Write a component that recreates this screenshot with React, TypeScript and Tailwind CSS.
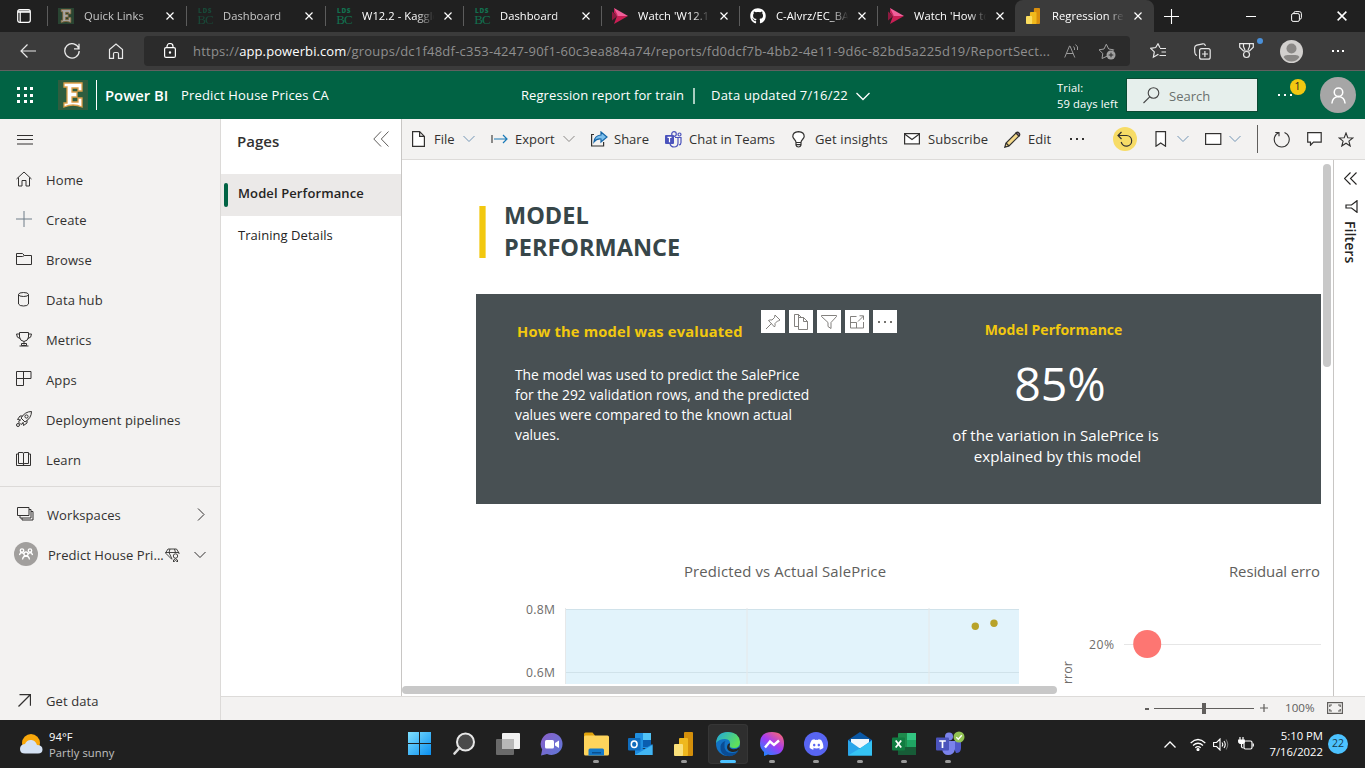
import type { ReactNode } from "react";
import { FaGithub, FaDiscord } from "react-icons/fa";

type SvgProps = { w?: number; h?: number; vb?: string; className?: string; children: ReactNode; sw?: number };

function Svg({ w = 16, h = 16, vb, className = "", children, sw = 1 }: SvgProps) {
  return (
    <svg
      width={w}
      height={h}
      viewBox={vb ?? `0 0 ${w} ${h}`}
      fill="none"
      stroke="currentColor"
      strokeWidth={sw}
      className={`block shrink-0 ${className}`}
    >
      {children}
    </svg>
  );
}

function CloseX({ size = 8 }: { size?: number }) {
  return (
    <Svg w={size} h={size} vb="0 0 8 8" sw={1.2} className="text-white">
      <path d="M.5.5l7 7M7.500.500l-7 7" />
    </Svg>
  );
}

function ChevDown({ className = "" }: { className?: string }) {
  return (
    <Svg w={12} h={8} className={className}>
      <path d="M.5 1L6 6.500 11.500 1" />
    </Svg>
  );
}

function ELogo({ size, dim }: { size: number; dim?: boolean }) {
  return (
    <svg width={size} height={size} viewBox="0 0 30 30" className={dim ? "block opacity-60" : "block"}>
      <rect width="30" height="30" fill="#2f5d3f" />
      <path
        d="M6 3h18v8h-4V8h-6v4h5v5h-5v5h6v-4h4v9q-9-4-18 0v-4h3V7H6z"
        fill="#fff"
        stroke="#e0a04a"
        strokeWidth="1.300"
      />
    </svg>
  );
}

function LdsLogo({ dim }: { dim?: boolean }) {
  return (
    <div className={`w-4 text-[#12704f] leading-none text-center ${dim ? "opacity-50" : ""}`}>
      <div className="h-[6px] font-['Open_Sans',sans-serif] text-[6.500px] leading-[6px] font-extrabold tracking-[0.500px]">LDS</div>
      <div className="h-[11px] font-['Liberation_Serif',serif] text-[13px] leading-[12px] tracking-[-0.800px]">BC</div>
    </div>
  );
}

function StreamLogo() {
  return (
    <svg width="16" height="16" viewBox="0 0 16 16" className="block">
      <path d="M2 0l14 8H4z" fill="#f0609a" />
      <path d="M2 0v5l4 3z" fill="#c22058" />
      <path d="M0 3.500L5.500 8 0 12.500z" fill="#8d1a40" />
      <path d="M2 16L16 8H5z" fill="#c91f55" />
    </svg>
  );
}

function PbiLogo({ w = 16, h = 16 }: { w?: number; h?: number }) {
  return (
    <svg width={w} height={h} viewBox="0 0 16 18" preserveAspectRatio="none" className="block">
      <rect x="9" y="0" width="7" height="18" rx="1" fill="#d98e0d" />
      <rect x="4.500" y="4.500" width="7.500" height="13.500" rx="1" fill="#f0b91c" />
      <rect x="0" y="9" width="7" height="9" rx="1" fill="#fbdd5e" />
    </svg>
  );
}

const tabs: { icon: ReactNode; label: string; dim?: boolean }[] = [
  { icon: <ELogo size={16} dim />, label: "Quick Links", dim: true },
  { icon: <LdsLogo dim />, label: "Dashboard", dim: true },
  { icon: <LdsLogo />, label: "W12.2 - Kaggle" },
  { icon: <LdsLogo />, label: "Dashboard" },
  { icon: <StreamLogo />, label: "Watch 'W12.1 -" },
  { icon: <FaGithub size={16} color="#fff" />, label: "C-Alvrz/EC_BAS" },
  { icon: <StreamLogo />, label: "Watch 'How to" },
];

function TabBody({ icon, label, dim }: { icon: ReactNode; label: string; dim?: boolean }) {
  return (
    <>
      <div className="w-4 flex-none">{icon}</div>
      <div
        className={`ml-[10px] w-[73px] flex-none overflow-hidden whitespace-nowrap text-[11.200px] tracking-[0.050px] ${dim ? "text-[#c8c8c8]" : "text-white"} [mask-image:linear-gradient(to_right,black_74%,transparent_99%)]`}
      >
        {label}
      </div>
      <div className="ml-[9px]">
        <CloseX />
      </div>
    </>
  );
}

function TabBar() {
  return (
    <div className="flex h-8 bg-[#202020] items-center">
      <div className="w-[47px] flex-none pl-[17px] text-white">
        <Svg w={14} h={14} sw={1.2}>
          <rect x=".7" y=".7" width="12.600" height="12.600" rx="2" />
          <path d="M1 3.200h12M3.200 3.500v9.500" />
          <path d="M1 2.200h12" />
        </Svg>
      </div>
      {tabs.map((t, i) => (
        <div key={i} className={`flex flex-none items-center h-full ${i < 2 ? "w-[139px]" : "w-[138px]"}`}>
          <div className="h-5 w-px mr-[10px] bg-[#5c5c5c]" />
          <TabBody {...t} />
        </div>
      ))}
      <div className="flex h-full w-[139px] flex-none items-center rounded-t-lg bg-[#3b3b3b] pl-[11px]">
        <TabBody icon={<PbiLogo w={14} />} label="Regression rep" />
      </div>
      <div className="ml-[10px] text-white">
        <Svg w={15} h={15} sw={1.1}>
          <path d="M7.500 0v15M0 7.500h15" />
        </Svg>
      </div>
      <div className="ml-[67px] h-px w-[10px] bg-white" />
      <div className="ml-[35px] text-white">
        <Svg w={11} h={11}>
          <rect x=".6" y="2.600" width="7.800" height="7.800" rx="1.500" />
          <path d="M2.800 2.500V2Q2.800.6 4.300.6h4q2.100 0 2.100 2.100v4q0 1.300-1.400 1.500" />
        </Svg>
      </div>
      <div className="ml-[35px]">
        <CloseX size={10} />
      </div>
    </div>
  );
}

function AddressBar() {
  return (
    <div className="flex h-[38px] items-center bg-[#3b3b3b] text-[#e8e8e8]">
      <div className="ml-5 w-[44px] flex-none">
        <Svg w={16} h={14} sw={1.200}>
          <path d="M16 7H1M7.500.5L1 7l6.500 6.500" />
        </Svg>
      </div>
      <div className="w-[44px] flex-none">
        <Svg w={16} h={16} sw={1.300}>
          <path d="M14.800 5.500A7.200 7.200 0 1 0 15.200 8M15 .8v5h-5" />
        </Svg>
      </div>
      <div className="w-[36px] flex-none">
        <Svg w={16} h={16} sw={1.200}>
          <path d="M1.500 6.500L8 1l6.500 5.500v8.800h-4v-4.500q0-1.300-1.300-1.300H6.800q-1.300 0-1.300 1.300v4.500h-4z" />
        </Svg>
      </div>
      <div className="flex h-[30px] w-[986px] flex-none items-center rounded-[4px] bg-[#2b2b2b] pl-5">
        <Svg w={12} h={15} sw={1.200} className="-mt-px text-white">
          <rect x=".6" y="4.600" width="10.800" height="9.800" rx="1.500" />
          <path d="M3 4.500V3.500a3 3 0 0 1 6 0v1" />
          <circle cx="6" cy="9.500" r=".6" fill="#fff" />
        </Svg>
        <div className="mt-px ml-[17px] w-[871px] flex-none whitespace-nowrap text-[13px] tracking-[0.230px] text-[#8f8f8f]">
          https://<span className="tracking-[0.100px] text-white">app.powerbi.com</span>
          /groups/dc1f48df-c353-4247-90f1-60c3ea884a74/reports/fd0dcf7b-4bb2-4e11-9d6c-82bd5a225d19/ReportSect...
        </div>
        <Svg w={16} h={16} className="text-[#9a9a9a]">
          <path d="M.7 14.500L5.500 3h.5l4.800 11.500M2.300 10.500h6.900M9.500 3.500q1.500 1.500 1 3.500M11.500 1.500q3 2 2 5.500" />
        </Svg>
        <Svg w={18} h={17} className="ml-[18px] text-[#a0a0a0]">
          <path d="M9.500 13L4 15.500l.8-5L1 6.800l5-.8L8.300 1.200l2.400 4.800 5 .8-1.500 1.500" />
          <circle cx="13" cy="12" r="4.500" fill="#a0a0a0" stroke="none" />
          <path d="M10.700 12h4.600M13 9.700v4.600" stroke="#2b2b2b" />
        </Svg>
      </div>
      <Svg w={17} h={16} sw={1.200} className="ml-[20px]">
        <path d="M8.500 11.700L8 11.500l-4.600 2.700.9-5.300L.7 5.300l5-.8L8 .8l2 4M10 5.500H16M11.500 9H16M9.500 12.500h6.500" />
      </Svg>
      <Svg w={17} h={17} sw={1.200} className="ml-[27px]">
        <rect x="5.600" y="5.600" width="10.600" height="10.600" rx="2" />
        <path d="M10.900 8v6M8 11h6M3 12.500Q1 12 .8 9.500L.6 5Q.6 2.800 2.800 2.200l6-1.400q2-.3 2.700 2" />
      </Svg>
      <Svg w={15} h={16} sw={1.200} className="ml-[28px]">
        <path d="M.7.700h13.600v3.500L10.500 8h-6L.7 4.200zM4.500.7v3L6 7M10.500.7v3L9 7" />
        <circle cx="7.500" cy="11.500" r="3" />
      </Svg>
      <div className="relative -ml-px h-full w-4 flex-none">
        <div className="absolute left-[4px] top-[6px] h-[6px] w-[6px] rounded-full bg-[#4a90d9]" />
      </div>
      <svg width="23" height="23" viewBox="0 0 23 23" className="ml-[11px] flex-none">
        <circle cx="11.500" cy="11.500" r="11.500" fill="#d2d0ce" />
        <circle cx="11.500" cy="8.500" r="5" fill="#8a8886" />
        <path d="M3.500 17q1-2 4-2h8q3 0 4 2-3 4.500-8 4.500t-8-4.500z" fill="#8a8886" />
      </svg>
      <div className="ml-[29px] flex gap-[3px]">
        <div className="h-[2px] w-[2px] bg-white" />
        <div className="h-[2px] w-[2px] bg-white" />
        <div className="h-[2px] w-[2px] bg-white" />
      </div>
    </div>
  );
}

function PersonIcon({ size }: { size: number }) {
  return (
    <Svg w={size} h={size} vb="0 0 16 18" sw={1.600}>
      <circle cx="8" cy="5.500" r="4.500" />
      <path d="M1 17.500q.5-7 7-7.500 6.500.5 7 7.500" />
    </Svg>
  );
}

function AppHeader() {
  return (
    <header className="flex h-12 items-center bg-[#016344] text-white">
      <div className="ml-[17px] grid w-[41px] flex-none grid-cols-[3px_3px_3px] gap-[3.500px]">
        {Array.from({ length: 9 }, (_, i) => (
          <div key={i} className="size-[3px] bg-white" />
        ))}
      </div>
      <ELogo size={30} />
      <div className="ml-[8px] h-[30px] w-px flex-none bg-white" />
      <div className="ml-[8px] w-[76px] flex-none whitespace-nowrap text-[14.800px] font-semibold">Power BI</div>
      <div className="mt-[2px] w-[340px] flex-none whitespace-nowrap text-[13px] tracking-[0.170px]">Predict House Prices CA</div>
      <div className="mt-[2px] w-[172px] flex-none whitespace-nowrap text-[13px] tracking-[0.080px]">Regression report for train</div>
      <div className="mt-[2px] h-4 w-[2px] flex-none bg-[#a9cdc0]" />
      <div className="mt-[2px] ml-[16px] w-[145px] flex-none whitespace-nowrap text-[13px] tracking-[0.200px]">Data updated 7/16/22</div>
      <Svg w={14} h={9} sw={1.300} className="mt-[2px]">
        <path d="M.5 1L7 7.500 13.500 1" />
      </Svg>
      <div className="mt-[2px] ml-[187px] w-[69px] flex-none whitespace-nowrap text-[11.200px] leading-4 tracking-[0.130px]">
        Trial:
        <br />
        59 days left
      </div>
      <div className="flex h-[34px] w-[132px] flex-none items-center border border-[#0a4a33] bg-[#e6efec] pl-[16px]">
        <Svg w={17} h={17} className="text-[#444]" sw={1.100}>
          <circle cx="10.500" cy="6" r="5.300" />
          <path d="M6.700 9.800L.5 16" />
        </Svg>
        <span className="mt-[3px] ml-[9px] text-[13px] text-[#6a716e]">Search</span>
      </div>
      <div className="relative ml-[20px] flex w-[40px] flex-none gap-[4px]">
        <div className="size-[2px] bg-white" />
        <div className="size-[2px] bg-white" />
        <div className="size-[2px] bg-white" />
        <div className="absolute -top-[15px] left-[11.500px] flex size-4 items-center justify-center rounded-full bg-[#f2c811] text-[10.500px] text-[#222]">
          1
        </div>
      </div>
      <div className="ml-[2px] flex size-9 flex-none items-center justify-center rounded-full bg-[#a6a6a6]">
        <PersonIcon size={17} />
      </div>
    </header>
  );
}

const nav: { label: string; icon: ReactNode }[] = [
  { label: "Home", icon: <path d="M.5 8L8 1l7.500 7M2.500 6.500V15H6V9.500h4V15h3.500V6.500" /> },
  { label: "Create", icon: <path d="M8 0v16M0 8h16" stroke="#6f7d88" /> },
  { label: "Browse", icon: <path d="M.5 2.500h6l2 2h7v9H.5zM.5 5.500h6l2-1" /> },
  {
    label: "Data hub",
    icon: (
      <>
        <ellipse cx="7.500" cy="3.500" rx="5" ry="2" />
        <path d="M2.500 3.500v9.500q1 2 5 2t5-2V3.500" />
      </>
    ),
  },
  {
    label: "Metrics",
    icon: <path d="M3.500 1.500h9V6q-.5 4-4.500 4.500Q4 10 3.500 6zM3.500 3H.5q0 4 3.500 4.500M12.500 3h3q0 4-3.500 4.500M8 10.500v3M5.500 12.500h5v2h-5zM3.500 15h9" />,
  },
  { label: "Apps", icon: <path d="M.5.500h14.500v7H.5zM.5 7.500h7v7H.5zM7.500.5v7" /> },
  {
    label: "Deployment pipelines",
    icon: (
      <>
        <path d="M15.500.500Q9 .5 5 7l4 4Q15.500 7 15.500.500zM6.500 5H4L1.500 8.500 5 9M11 9.500V12l-3.500 2.500L7 11M4 9l-1.500 2 2.500 2.500L7 12" />
        <circle cx="10.500" cy="5.500" r="1.600" />
        <circle cx="2" cy="14" r="1.500" />
      </>
    ),
  },
  { label: "Learn", icon: <path d="M2.500 1.500h3.500q1.500 0 1.500 1v11q0-1-1.500-1H2.500zM12.500 1.500H9q-1.500 0-1.500 1v11q0-1 1.500-1h3.500zM2.500 3h-2v11.500h14V3h-2" /> },
];

function Sidebar() {
  return (
    <aside className="flex w-[221px] flex-none flex-col border-r border-[#dcdad8] bg-[#f3f2f1] text-[13px] text-[#323130]">
      <div className="flex h-[41px] items-center pl-[17px]">
        <Svg w={16} h={10}>
          <path d="M0 .500h16M0 4.500h16M0 9h16" />
        </Svg>
      </div>
      <nav>
        {nav.map((n) => (
          <div key={n.label} className="flex h-10 items-center pl-4">
            <Svg className="-mt-[3px]">{n.icon}</Svg>
            <span className="ml-[14px] mt-[2px] whitespace-nowrap tracking-[0.120px]">{n.label}</span>
          </div>
        ))}
      </nav>
      <div className="mt-[6px] h-px bg-[#dcdad8]" />
      <div className="mt-[8px] flex h-10 items-center pl-[17px]">
        <Svg w={17} h={14} className="-mt-[3px]">
          <path d="M.5.500h11.500v8H.5zM12 2.500h2v8.500H3V9M14 4.500h2v8.500H5V11" />
        </Svg>
        <span className="mt-[2px] ml-[13px] w-[150px] flex-none tracking-[0.080px]">Workspaces</span>
        <Svg w={8} h={13} className="-mt-[2px]">
          <path d="M1 .5l6 6-6 6" />
        </Svg>
      </div>
      <div className="flex h-10 items-center pl-[14px]">
        <div className="-mt-[2px] flex size-6 flex-none items-center justify-center rounded-full bg-[#a19f9d] text-white">
          <Svg w={14} h={12} sw={1.300}>
            <circle cx="3" cy="2.500" r="1.700" />
            <circle cx="11" cy="2.500" r="1.700" />
            <circle cx="7" cy="6" r="2" />
            <path d="M.5 7q.5-2.500 2.500-2.500L5 6M13.500 7q-.5-2.500-2.500-2.500L9 6M3.500 11.500Q4 8 7 8t3.500 3.500" />
          </Svg>
        </div>
        <span className="mt-[2px] ml-[10px] w-[117px] flex-none whitespace-nowrap tracking-[0.050px]">Predict House Pri...</span>
        <Svg w={15} h={14} sw={0.9} className="-mt-px">
          <path d="M7 11.500L.5 5 3 1h8.500L14 5v1M.5 4.500H14M5 1L4 4.500 7 11M9.500 1l1 3.500" />
          <circle cx="10.500" cy="8" r="2.200" />
          <path d="M8.500 14v-2q2-2.500 4 0v2l-2-1.500z" />
        </Svg>
        <ChevDown className="-mt-px ml-[14px]" />
      </div>
      <div className="mt-auto mb-px flex h-9 items-center pl-[18px]">
        <Svg w={13} h={13} sw={1.300} className="-mt-px">
          <path d="M.5 12.500l12-12M1.500.700h11v11" />
        </Svg>
        <span className="mt-[2px] ml-[15px] tracking-[0.100px]">Get data</span>
      </div>
    </aside>
  );
}

function PagesPanel() {
  return (
    <section className="w-[181px] flex-none border-r border-[#c8c6c4] bg-white text-[#252423]">
      <div className="flex h-[55px] items-start pl-4">
        <h2 className="mt-[11px] w-[136px] text-[15px] leading-[22px] font-semibold text-[#323130]">Pages</h2>
        <Svg w={16} h={16} className="mt-[12px] text-[#605e5c]">
          <path d="M8 .5L.8 8 8 15.500M15.500.5L8.300 8l7.200 7.500" />
        </Svg>
      </div>
      <div className="flex h-[42px] items-center bg-[#ebe9e8] pl-[3px]">
        <div className="h-6 w-1 rounded-sm bg-[#016344]" />
        <span className="-mt-[2px] ml-[10px] whitespace-nowrap text-[13px] font-semibold tracking-[0.110px]">Model Performance</span>
      </div>
      <div className="flex h-[42px] items-center pl-[17px] text-[13px]">
        <span className="-mt-[2px] tracking-[0.050px]">Training Details</span>
      </div>
    </section>
  );
}

function ActionBar() {
  return (
    <div className="flex h-[41px] flex-none items-center border-b border-[#dddbd9] bg-[#f3f2f1] text-[13px] whitespace-nowrap text-[#323130] *:flex-none">
      <Svg w={13} h={16} className="ml-[10px]" sw={1.200}>
        <path d="M.6.600h7l4.800 4.800v10H.6zM7.600.6v4.800h4.800" fill="#fff" />
      </Svg>
      <span className="mt-[2px] ml-[9px] w-[29px]">File</span>
      <ChevDown className="text-[#7395b5]" />
      <Svg w={17} h={10} className="ml-[16px] text-[#1a7ab8]" sw={1.200}>
        <path d="M1 1v8" stroke="#444" />
        <path d="M3 5h13M12 1l4 4-4 4" />
      </Svg>
      <span className="mt-[2px] ml-[7px] w-[48px]">Export</span>
      <ChevDown className="text-[#8a8886]" />
      <Svg w={17} h={16} className="ml-[16px]" sw={1.200}>
        <path d="M3 3.500H.6v11.500h12V11" />
        <path d="M10 1l6 5-6 5V8Q5.500 7.500 3 11 3.500 4.500 10 4z" fill="#7cc0ee" stroke="#1666a8" />
      </Svg>
      <span className="mt-[2px] ml-[6px] w-[51px]">Share</span>
      <svg width="17" height="17" viewBox="0 0 17 17" fill="none" stroke="#4b53bc" strokeWidth="1.200">
        <circle cx="9" cy="3" r="2.300" />
        <circle cx="14.500" cy="3.500" r="1.500" />
        <path d="M10 6.500h6v5q0 2-2 2.500M5 13q1 3 4 3 4 0 4-4V6.500" />
        <rect x="0" y="4" width="9" height="9" rx="1" fill="#4b53bc" stroke="none" />
        <path d="M2.500 6.300h4M4.500 6.300v4.900" stroke="#fff" />
      </svg>
      <span className="mt-[2px] ml-[7px] w-[103px]">Chat in Teams</span>
      <Svg w={13} h={17} sw={1.200}>
        <path d="M4 11.500Q4 10 2.500 8.500.8 6.500.8 5.500.8 1 6.500.600 12.200 1 12.200 5.500q0 1-1.700 3Q9 10 9 11.500V14q-.5 2-2.500 2T4 14z" fill="#fff" />
        <path d="M4 11.500h5M4 13.700h5" />
      </Svg>
      <span className="mt-[2px] ml-[10px] w-[89px] tracking-[0.130px]">Get insights</span>
      <Svg w={16} h={12} sw={1.200} className="-mt-px">
        <rect x=".6" y=".6" width="14.800" height="10.300" fill="#fff" />
        <path d="M.6 1L8 6.500 15.400 1" />
      </Svg>
      <span className="mt-[2px] ml-[8px] w-[76px] tracking-[0.080px]">Subscribe</span>
      <Svg w={17} h={17} sw={1.200}>
        <path d="M.8 16.200L2 12 12 2l3 3L5 15z" fill="#f5d98a" />
        <path d="M12 2q1.500-1.500 3 0t0 3z" fill="#b887b0" />
        <path d="M2 12l3 3" />
      </Svg>
      <span className="mt-[2px] ml-[7px] w-[42px]">Edit</span>
      <div className="flex w-[43px] gap-[4px]">
        <i className="size-[2px] bg-[#323130]" />
        <i className="size-[2px] bg-[#323130]" />
        <i className="size-[2px] bg-[#323130]" />
      </div>
      <div className="flex size-6 items-center justify-center rounded-full bg-[#f7dc66]">
        <Svg w={16} h={16} sw={1.200}>
          <path d="M1 4.500h8.500a5.300 5.300 0 1 1-5.300 6.500M4.500 1L1 4.500 4.500 8" />
        </Svg>
      </div>
      <Svg w={12} h={16} className="ml-[18px]" sw={1.200}>
        <path d="M1 .600h9.500v14.600L5.700 12 1 15.200z" fill="#fff" />
      </Svg>
      <ChevDown className="ml-[10px] text-[#7395b5]" />
      <Svg w={17} h={12} className="ml-[16px]" sw={1.200}>
        <rect x=".6" y=".6" width="15.200" height="10.800" fill="#fff" />
      </Svg>
      <ChevDown className="ml-[7px] text-[#7395b5]" />
      <div className="ml-[16px] h-7 w-px bg-[#605e5c]" />
      <Svg w={18} h={17} className="ml-[15px]" sw={1.100}>
        <path d="M6 1.500a7.500 7.500 0 1 0 5.500 0M2.300 1.500H6v3.700" />
      </Svg>
      <Svg w={15} h={14} className="ml-[16px]" sw={1.200}>
        <path d="M.7.700h13.500v9.500H6.500l-3 3v-3H.7z" fill="#fff" />
      </Svg>
      <Svg w={16} h={15} className="ml-[16px]" sw={1.100}>
        <path d="M8 1l1.800 4.700 5 .2-3.900 3.200 1.300 4.900L8 11.200 3.800 14l1.300-4.900L1.200 5.900l5-.2z" />
      </Svg>
    </div>
  );
}

const visualButtons: ReactNode[] = [
  <path d="M10 1l5 5-1.500.8-1 .2-2.500 2.500q.5 2-.5 3.500L3.500 6.500Q5 5.500 7 6l2.500-2.500zM6.500 9.500L1 15" />,
  <path d="M5.500 3.500V.500H1.500v12h3.500M5.500 3.500h5l4 4v8h-9zM10.500 3.500v4h4M5.500.5l3 3" />,
  <path d="M.5 1.500h15v1L10 8.500v6l-3-2V8.500L.5 2.500z" />,
  <path d="M7.500 2.500h-6v11.500h13V8M1.500 8.500h6v5.500M9 7.500l5.500-5.500M10.500 1.800h4v4" />,
  <path d="M1 8h2M7 8h2M13 8h2" strokeWidth="2" />,
];

function Report() {
  return (
    <div className="h-[524px] w-[919px] overflow-hidden">
      <div className="ml-[77px] flex h-[134px] items-start pt-[46px]">
        <div className="h-[52px] w-[7px] border-x-[0.500px] border-[#f7dc66] bg-[#f2c80f]" />
        <h1 className="ml-[18px] -mt-[7px] w-[240px] text-[23.500px] leading-8 font-bold text-[#374649]">
          MODEL
          <br />
          PERFORMANCE
        </h1>
      </div>
      <div className="relative ml-[74px] flex h-[210px] bg-[#485053] text-white">
        <div className="w-[476px] flex-none pl-[39px]">
          <h3 className="mt-[27px] pl-[2px] text-[14.700px] leading-5 font-bold tracking-[0.180px] text-[#f2c80f]">How the model was evaluated</h3>
          <p className="mt-[24px] whitespace-nowrap text-[13.850px] leading-5">
            The model was used to predict the SalePrice
            <br />
            for the 292 validation rows, and the predicted
            <br />
            values were compared to the known actual
            <br />
            values.
          </p>
        </div>
        <div className="w-[207px] flex-none text-center whitespace-nowrap">
          <h3 className="mt-[26px] pr-[4px] text-[14px] leading-5 font-bold text-[#f2c80f]">Model Performance</h3>
          <div className="mt-[11px] pl-[9px] text-[46.500px] leading-[64px]">85%</div>
          <p className="mt-[10px] text-[15.100px] leading-[21px]">
            of the variation in SalePrice is
            <br />
            <span className="pl-[4px]">explained by this model</span>
          </p>
        </div>
        <div className="absolute top-[16px] left-[285px] flex gap-1">
          {visualButtons.map((b, i) => (
            <div key={i} className="flex h-[23px] w-6 items-center justify-center bg-white text-[#75736f]">
              <Svg sw={0.9}>{b}</Svg>
            </div>
          ))}
        </div>
      </div>
      <svg width="919" height="180" viewBox="402 504 919 180" className="block">
        <g fill="#605e5c" className="text-[14.900px]">
          <text x="684" y="577" textLength="202">Predicted vs Actual SalePrice</text>
          <text x="1229" y="577" textLength="91">Residual erro</text>
        </g>
        <g fill="#6e6c6a" className="text-[12.200px]">
          <text x="526" y="614" textLength="29">0.8M</text>
          <text x="526" y="677" textLength="29">0.6M</text>
          <text x="1089" y="649" textLength="25">20%</text>
          <text transform="translate(1072 684) rotate(-90)" className="text-[12.500px]">rror</text>
        </g>
        <rect x="565" y="609" width="454" height="80" fill="#e2f3fb" />
        <path d="M565 609.500h454M565 672.500h454" stroke="#d0e2ea" />
        <path d="M565.500 608v80M747 608v80M929 608v80" stroke="#e6e8e9" />
        <circle cx="975.300" cy="626.300" r="3.700" fill="#b8a229" />
        <circle cx="994" cy="623.200" r="3.700" fill="#b8a229" />
        <path d="M1124 644.500h197" stroke="#e6e6e6" />
        <circle cx="1147.200" cy="644" r="14" fill="#fd7672" />
      </svg>
    </div>
  );
}

function FiltersPane() {
  return (
    <aside className="flex w-8 flex-none flex-col items-center border-l border-[#c8c6c4] bg-white text-[#252423]">
      <Svg w={13} h={13} className="mt-[12px] ml-[2px]" sw={1.100}>
        <path d="M6.500.5l-6 6 6 6M12.500.5l-6 6 6 6" />
      </Svg>
      <Svg w={13} h={13} className="mt-[15px] ml-[4px]" sw={1.200}>
        <path d="M12 .7v11.600L6.500 8H1V5h5.500z" />
      </Svg>
      <div className="mt-[8px] text-[14px] leading-5 font-semibold tracking-[0.100px] [writing-mode:vertical-rl]">Filters</div>
    </aside>
  );
}

function StatusBar() {
  return (
    <div className="flex h-6 flex-none items-center border-t border-[#dddbd9] bg-[#f3f2f1] text-[#605e5c]">
      <div className="ml-[924px] h-[2px] w-[4px] bg-[#605e5c]" />
      <div className="ml-[5px] flex h-[11px] w-[100px] flex-none items-center">
        <div className="h-px w-12 bg-[#605e5c]" />
        <div className="h-[11px] w-1 bg-[#605e5c]" />
        <div className="h-px w-12 bg-[#605e5c]" />
      </div>
      <Svg w={8} h={8} className="-mt-px ml-[6px]" sw={1.200}>
        <path d="M4 0v8M0 4h8" />
      </Svg>
      <div className="-mt-px ml-[17px] w-[42px] flex-none text-[11.600px]">100%</div>
      <Svg w={16} h={12} sw={1.200} className="-mt-px">
        <rect x=".6" y=".6" width="14.800" height="10.800" />
        <path d="M2.800 5V3H5M11 3h2.200v2M13.200 7v2H11M5 9H2.800V7" />
      </Svg>
    </div>
  );
}

function Grad({ id, a, b }: { id: string; a: string; b: string }) {
  return (
    <linearGradient id={id} x1="0" y1="0" x2="1" y2="1">
      <stop offset="0" stopColor={a} />
      <stop offset="1" stopColor={b} />
    </linearGradient>
  );
}

const apps: { art: ReactNode; dot?: boolean; active?: boolean }[] = [
  {
    art: (
      <>
        <defs><Grad id="win" a="#7fe0ff" b="#0a8ff0" /></defs>
        <path d="M0 0h11v11H0zM12 0h11v11H12zM0 12h11v11H0zM12 12h11v11H12z" fill="url(#win)" />
      </>
    ),
  },
  {
    art: (
      <>
        <circle cx="13.500" cy="10" r="8.500" fill="#4a4a4a" stroke="#e8e8e8" strokeWidth="2" />
        <path d="M7.500 16L2.500 21.500" stroke="#dcdcdc" strokeWidth="2.600" strokeLinecap="round" />
      </>
    ),
  },
  {
    art: (
      <>
        <rect x="6" y="1" width="18" height="16" rx="1" fill="#f0f0f0" />
        <rect x="0" y="7" width="18" height="16" rx="1" fill="#6a6a6a" />
        <path d="M6 7h12v10H6z" fill="#b8b8b8" />
      </>
    ),
  },
  {
    art: (
      <>
        <defs><Grad id="chat" a="#8a5fc8" b="#5d78d8" /></defs>
        <path d="M12 1a11 11 0 1 1-5 21L1 23.500 2.200 17.500A11 11 0 0 1 12 1z" fill="url(#chat)" />
        <rect x="5" y="8" width="9" height="8.500" rx="1.500" fill="#fff" />
        <path d="M15 11l4-2.500v7.500l-4-2.500z" fill="#fff" />
      </>
    ),
  },
  {
    dot: true,
    art: (
      <>
        <path d="M0 2q0-1.500 1.500-1.500h7L11 3.500V8H0z" fill="#e0a30c" />
        <rect x="0" y="3.500" width="25" height="20" rx="1.500" fill="#fdd45c" />
        <path d="M4.500 23.500V18q0-1.500 1.500-1.500h12.500q1.500 0 1.500 1.500v5.500z" fill="#1479c9" />
        <path d="M8 20h9v1.500H8z" fill="#0b4f8c" />
      </>
    ),
  },
  {
    art: (
      <>
        <rect x="7" y="1" width="16" height="15" rx="1" fill="#1f8fe0" />
        <path d="M15 1h8v7h-8z" fill="#52c3f5" />
        <path d="M15 8h8v7h-8z" fill="#0a5eb0" />
        <path d="M7 12l9 5 8.500-5v11H7z" fill="#1d8be0" />
        <path d="M7 23l17.500-10V23z" fill="#42b5f2" />
        <rect x="0" y="6" width="12.500" height="12.500" rx="1" fill="#0f6cbd" />
        <ellipse cx="6.200" cy="12.200" rx="2.900" ry="3.300" stroke="#fff" strokeWidth="1.500" />
      </>
    ),
  },
  {
    dot: true,
    art: (
      <>
        <rect x="12" y="0" width="9" height="24" rx="1" fill="#d48f0a" />
        <rect x="7" y="6" width="9" height="18" rx="1" fill="#efb81e" />
        <rect x="2" y="12" width="9" height="12" rx="1" fill="#fae07a" />
      </>
    ),
  },
  {
    active: true,
    art: (
      <>
        <defs>
          <linearGradient id="edge" x1="0" y1="0" x2="1" y2=".5">
            <stop offset="0" stopColor="#1fa6e0" />
            <stop offset="1" stopColor="#5fe05a" />
          </linearGradient>
        </defs>
        <circle cx="12" cy="12" r="12" fill="#1272c4" />
        <path d="M0 11Q1 0 12 0t12 10q0 6-6 6-5 0-4-3 1-6-5-6-6 0-9 4z" fill="url(#edge)" />
        <path d="M8.500 12q-1 9 8 9 4 0 6-2-4 6-11 5-8-2-7-10 1-4 5-5-1 1-1 3z" fill="#0a4c94" />
        <path d="M14 12.500q-2 3 2 4.500 4 1 7.500-2l-.5 2.500q-3 3-7 2.500-5-1-5-5 0-2.500 2.500-4z" fill="#252525" />
      </>
    ),
  },
  {
    dot: true,
    art: (
      <>
        <defs>
          <linearGradient id="msg" x1=".2" y1="1" x2=".9" y2="0">
            <stop offset="0" stopColor="#1b87ff" />
            <stop offset=".5" stopColor="#a33bf5" />
            <stop offset="1" stopColor="#ff6a6a" />
          </linearGradient>
        </defs>
        <path d="M12 0q12 0 12 11.500T12 23q-2 0-4-.5L4 24v-4Q0 17 0 11.500 0 0 12 0z" fill="url(#msg)" />
        <path d="M5 15.500L10 9.500l4 3.500 5-4.500" stroke="#fff" strokeWidth="2.400" />
      </>
    ),
  },
  { dot: true, art: null },
  {
    dot: true,
    art: (
      <>
        <path d="M0 8L12 0l12 8v3H0z" fill="#0a57a4" />
        <path d="M3 7h18v9H3z" fill="#f2f7fb" />
        <path d="M0 8l12 8.500L24 8v15.500H0z" fill="#2aa5ea" />
        <path d="M0 23.500L24 9v14.500z" fill="#35c3f3" />
      </>
    ),
  },
  {
    dot: true,
    art: (
      <>
        <rect x="6" y="1" width="18" height="22" rx="1" fill="#1e8a4c" />
        <path d="M15 1h9v7h-9z" fill="#33c481" />
        <path d="M15 8h9v7h-9z" fill="#1fa663" />
        <path d="M6 15h18v8H6z" fill="#175c37" />
        <rect x="0" y="5.500" width="13" height="13" rx="1" fill="#107c41" />
        <path d="M3.700 8.500l5.500 7M9.200 8.500l-5.500 7" stroke="#fff" strokeWidth="1.800" />
      </>
    ),
  },
  {
    dot: true,
    art: (
      <>
        <circle cx="13" cy="4.500" r="4" fill="#7b83eb" />
        <circle cx="21" cy="5.500" r="3" fill="#5059c9" />
        <path d="M15 9h10v7q0 5-5 5z" fill="#5059c9" />
        <path d="M6 9h13v8q-1 6-7 6-5 0-6-6z" fill="#7b83eb" />
        <rect x="0" y="5.500" width="13" height="13" rx="1" fill="#4b53bc" />
        <path d="M3.200 9h6.600M6.500 9v7" stroke="#fff" strokeWidth="1.700" />
      </>
    ),
  },
];

function Taskbar() {
  return (
    <footer className="flex h-12 items-center bg-[#202020] text-white">
      <svg width="23" height="20" viewBox="0 0 23 20" className="-mt-px ml-5 flex-none">
        <circle cx="11" cy="9" r="9" fill="#f9a80b" />
        <path d="M5 19.500Q0 19.500 0 15t5-5Q7 5.500 11.500 6q4 .5 5.500 5 5.500 0 5.500 4.500 0 4-4.500 4z" fill="#d5e2f4" />
      </svg>
      <div className="mt-[2px] ml-[6px] w-[350px] flex-none text-[11.200px] leading-4 tracking-[0.080px]">
        <div>94°F</div>
        <div className="text-[#c0c0c0]">Partly sunny</div>
      </div>
      <div className="flex flex-none gap-1 pl-px">
        {apps.map((a, i) => (
          <div
            key={i}
            className={`relative flex h-10 w-10 items-center justify-center rounded-[4px] ${a.active ? "bg-[#2e2e2e] ring-1 ring-[#363636] ring-inset" : ""}`}
          >
            {a.art ? (
              <svg width="24" height="24" viewBox="0 0 24 24" fill="none" className="overflow-visible">
                {a.art}
              </svg>
            ) : (
              <div className="flex size-6 items-center justify-center rounded-full bg-[#5865f2]">
                <FaDiscord size={15} />
              </div>
            )}
            {i === 12 && (
              <svg width="12" height="12" viewBox="0 0 12 12" className="absolute top-[7px] right-[3px]">
                <circle cx="6" cy="6" r="5.500" fill="#92c353" />
                <path d="M3.300 6.200l2 2 3.500-4" fill="none" stroke="#fff" strokeWidth="1.300" />
              </svg>
            )}
            {(a.dot || a.active) && (
              <div
                className={`absolute bottom-px h-[3px] rounded-full ${a.active ? "w-4 bg-[#4cc2ff]" : "w-[6px] bg-[#9a9a9a]"}`}
              />
            )}
          </div>
        ))}
      </div>
      <Svg w={12} h={7} className="ml-[196px]" sw={1.300}>
        <path d="M.5 6.500L6 1l5.500 5.500" />
      </Svg>
      <Svg w={16} h={13} className="ml-[14px]" sw={1.200}>
        <path d="M.7 5q7.300-7 14.600 0M3 7.500q5-4.500 10 0M5.300 9.800q2.700-2.400 5.400 0" />
        <circle cx="8" cy="11.500" r="1" fill="#fff" />
      </Svg>
      <Svg w={16} h={13} className="ml-[7px]" sw={1.100}>
        <path d="M.6 4.500h3L7 1v11L3.600 8.500h-3zM9 4.500q1.500 2 0 4M11 3q2.500 3.500 0 7" />
        <path d="M13 1.500q3.500 5 0 10" stroke="#777" />
      </Svg>
      <Svg w={17} h={14} className="ml-[9px]" sw={1.200}>
        <rect x="6" y="4" width="8" height="8" rx="1.500" />
        <path d="M15.300 6.500v3M2 0v3M5 0v3" />
        <path d="M.7 3h5.600v1.500q0 2-2.800 2-2.800 0-2.800-2z" fill="#fff" />
        <path d="M3.500 6.500V9.500q0 1.500 2 1.500" />
      </Svg>
      <div className="-mt-px ml-[7px] w-[61px] flex-none text-right text-[11.300px] leading-4 whitespace-nowrap">
        5:10 PM
        <br />
        <span>7/16/2022</span>
      </div>
      <div className="ml-[5px] flex size-5 flex-none items-center justify-center rounded-full bg-[#4cc2ff] text-[10.500px] text-[#15384a]">
        22
      </div>
    </footer>
  );
}

export default function App() {
  return (
    <div className="flex h-[768px] w-[1365px] flex-col overflow-hidden bg-white font-['Open_Sans','Noto_Sans',sans-serif]">
      <TabBar />
      <AddressBar />
      <div className="h-px bg-[#606060]" />
      <AppHeader />
      <main className="flex h-[601px] flex-none">
        <Sidebar />
        <div className="flex min-w-0 flex-1 flex-col">
          <div className="flex min-h-0 flex-1">
            <PagesPanel />
            <div className="flex min-w-0 flex-1 flex-col">
              <ActionBar />
              <div className="flex min-h-0 flex-1">
                <div className="flex-1">
                  <div className="flex">
                    <Report />
                    <div className="mt-1 ml-[2px] h-[203px] w-2 rounded-full bg-[#c8c8c8]" />
                  </div>
                  <div className="mt-[2px] h-2 w-[655px] rounded-full bg-[#c8c8c8]" />
                </div>
                <FiltersPane />
              </div>
            </div>
          </div>
          <StatusBar />
        </div>
      </main>
      <Taskbar />
    </div>
  );
}
